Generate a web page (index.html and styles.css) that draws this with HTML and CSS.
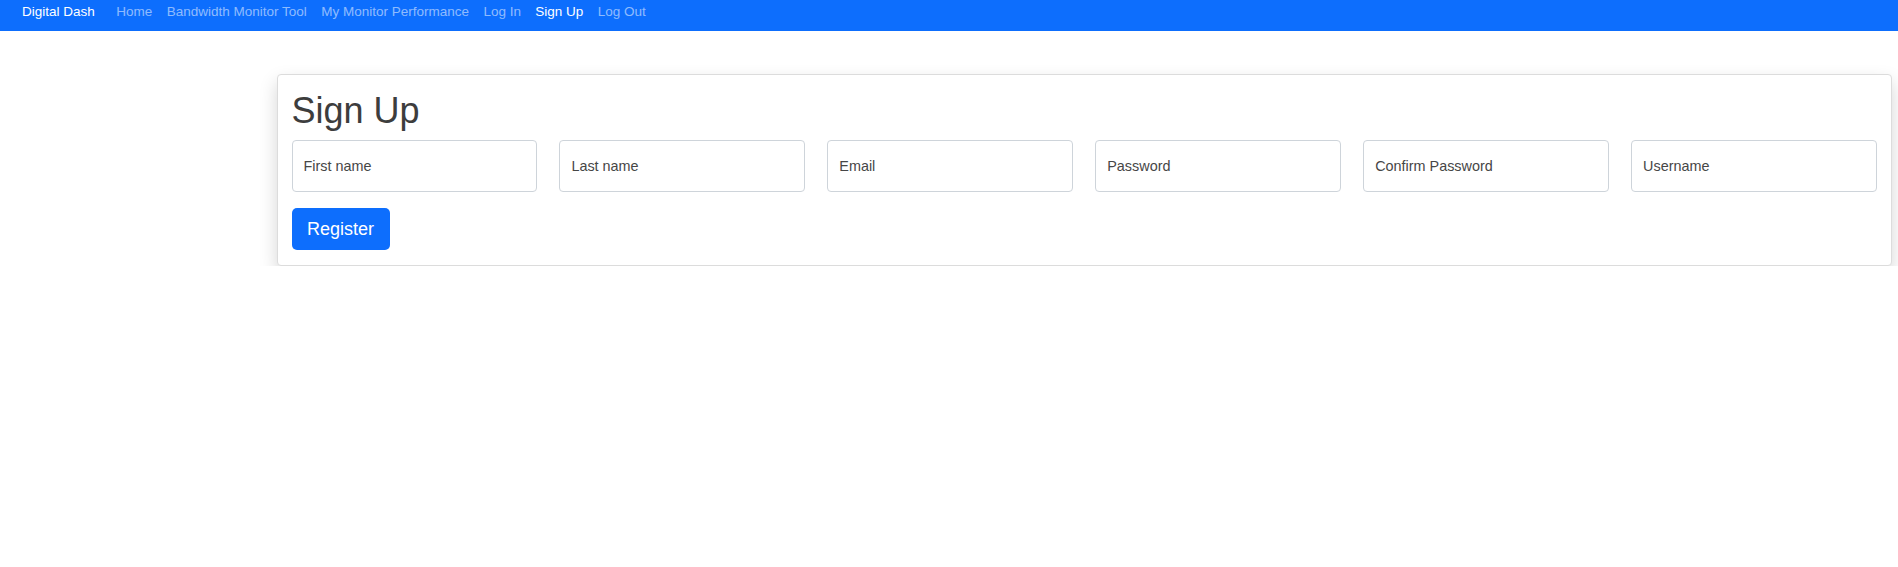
FILE: index.html
```html
<!DOCTYPE html>
<html lang="en">
<head>
<meta charset="utf-8">
<title>Sign Up - Digital Dash</title>
<link rel="stylesheet" href="styles.css">
</head>
<body>
<nav class="navbar">
  <a class="brand" href="#">Digital Dash</a>
  <ul class="nav">
    <li><a class="nav-link" href="#">Home</a></li>
    <li><a class="nav-link" href="#">Bandwidth Monitor Tool</a></li>
    <li><a class="nav-link" href="#">My Monitor Performance</a></li>
    <li><a class="nav-link" href="#">Log In</a></li>
    <li><a class="nav-link active" href="#">Sign Up</a></li>
    <li><a class="nav-link" href="#">Log Out</a></li>
  </ul>
</nav>
<main class="main">
  <section class="card">
    <h1 class="title">Sign Up</h1>
    <form class="form">
      <div class="fields">
        <input class="field" type="text" placeholder="First name">
        <input class="field" type="text" placeholder="Last name">
        <input class="field" type="email" placeholder="Email">
        <input class="field" type="password" placeholder="Password">
        <input class="field" type="password" placeholder="Confirm Password">
        <input class="field" type="text" placeholder="Username">
      </div>
      <div class="actions">
        <button class="btn" type="submit">Register</button>
      </div>
    </form>
  </section>
</main>
</body>
</html>
```

FILE: styles.css
```css
* {
  box-sizing: border-box;
}

html, body {
  margin: 0;
  padding: 0;
  background: #fff;
  font-family: "Liberation Sans", Arial, sans-serif;
}

.navbar {
  height: 31px;
  background: #0d6efd;
  display: flex;
  align-items: flex-start;
  padding: 4px 0 0 22px;
  font-size: 13.5px;
  line-height: 16px;
}

.brand {
  color: #fff;
  text-decoration: none;
  margin-right: 14.4px;
}

.nav {
  display: flex;
  list-style: none;
  margin: 0;
  padding: 0;
}

.nav-link {
  display: block;
  padding: 0 7.2px;
  color: rgba(255, 255, 255, 0.55);
  text-decoration: none;
}

.nav-link.active {
  color: #fff;
}

.main {
  padding: 43px 6px 0 276.5px;
}

.card {
  background: #fff;
  border: 1px solid #dcdcdc;
  border-radius: 4px;
  box-shadow: 0 8px 18px rgba(0, 0, 0, 0.17);
  padding: 14px 14px 15px;
}

.title {
  margin: 0 0 8px;
  font-size: 36px;
  line-height: 1.2;
  font-weight: 400;
  color: #3d3d3d;
}

.fields {
  display: grid;
  grid-template-columns: repeat(6, 1fr);
  gap: 22px;
}

.field {
  height: 51.5px;
  width: 100%;
  border: 1px solid #ced4da;
  border-radius: 4px;
  padding: 0 11px;
  font-family: "Liberation Sans", Arial, sans-serif;
  font-size: 14.4px;
  color: #333;
  background: #fff;
}

.field::placeholder {
  color: #464646;
  opacity: 1;
}

.actions {
  margin-top: 16px;
}

.btn {
  display: inline-block;
  background: #0d6efd;
  color: #fff;
  border: none;
  border-radius: 5px;
  padding: 8px 15.5px;
  font-family: "Liberation Sans", Arial, sans-serif;
  font-size: 18px;
  line-height: 26px;
}
```
